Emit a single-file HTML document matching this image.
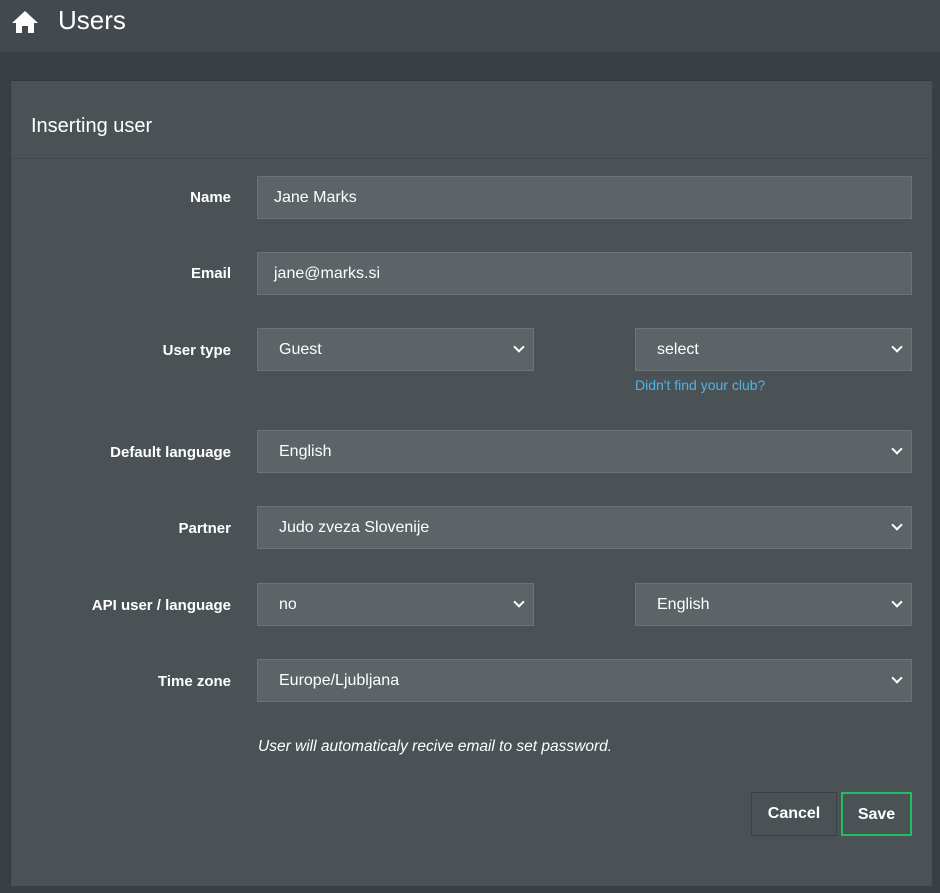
<!DOCTYPE html>
<html><head><style>
*{box-sizing:border-box;margin:0;padding:0}
body{width:940px;height:893px;background:#393f42;font-family:"Liberation Sans",sans-serif;color:#fff;position:relative;overflow:hidden}
.top{position:absolute;left:0;top:0;width:940px;height:52px;background:#434a4f}
.top .t{position:absolute;left:58px;top:5px;font-size:26px;color:#fff}
.panel{position:absolute;left:10px;top:80px;width:922px;height:806px;background:#4b5256;border-top:1px solid #33393c;border-left:1px solid #33393c}
.ph{height:78px;border-bottom:1px solid #42484b}
.ph span{position:absolute;left:20px;top:34px;font-size:20px}
.lbl{position:absolute;right:709px;font-size:15px;font-weight:bold;text-align:right}
.f{position:absolute;height:43px;background:#5d6467;border:1px solid #6c7376;font-size:16px;padding:12px 0 0 16px}
.f.s{padding-left:21px}
.f.s:after{content:"";position:absolute;right:10px;top:14px;width:6px;height:6px;border-right:2px solid #fff;border-bottom:2px solid #fff;transform:rotate(45deg)}
.link{position:absolute;left:635px;top:377px;font-size:14px;color:#4fb3e8}
.note{position:absolute;left:258px;top:738px;font-size:15.5px;font-style:italic}
.btn{position:absolute;top:792px;height:44px;font-size:16px;font-weight:bold;text-align:center;padding-top:12px;border:1px solid #3a4043}
</style></head><body>
<div class="top">
<svg style="position:absolute;left:11px;top:10px" width="28" height="24" viewBox="0 0 28 24"><path d="M14 1 L1 13 H5 V23 H11 V16 H17 V23 H23 V13 H27 Z" fill="#fff"/></svg>
<div class="t">Users</div></div>
<div class="panel"><div class="ph"><span>Inserting user</span></div></div>
<div class="lbl" style="top:189px">Name</div>
<div class="f" style="left:257px;top:176px;width:655px">Jane Marks</div>
<div class="lbl" style="top:265px">Email</div>
<div class="f" style="left:257px;top:252px;width:655px">jane@marks.si</div>
<div class="lbl" style="top:342px">User type</div>
<div class="f s" style="left:257px;top:328px;width:277px">Guest</div>
<div class="f s" style="left:635px;top:328px;width:277px">select</div>
<div class="link">Didn't find your club?</div>
<div class="lbl" style="top:444px">Default language</div>
<div class="f s" style="left:257px;top:430px;width:655px">English</div>
<div class="lbl" style="top:520px">Partner</div>
<div class="f s" style="left:257px;top:506px;width:655px">Judo zveza Slovenije</div>
<div class="lbl" style="top:597px">API user / language</div>
<div class="f s" style="left:257px;top:583px;width:277px">no</div>
<div class="f s" style="left:635px;top:583px;width:277px">English</div>
<div class="lbl" style="top:673px">Time zone</div>
<div class="f s" style="left:257px;top:659px;width:655px">Europe/Ljubljana</div>
<div class="note">User will automaticaly recive email to set password.</div>
<div class="btn" style="left:751px;width:86px">Cancel</div>
<div class="btn" style="left:841px;width:71px;border:2px solid #1fbf5f">Save</div>
</body></html>
